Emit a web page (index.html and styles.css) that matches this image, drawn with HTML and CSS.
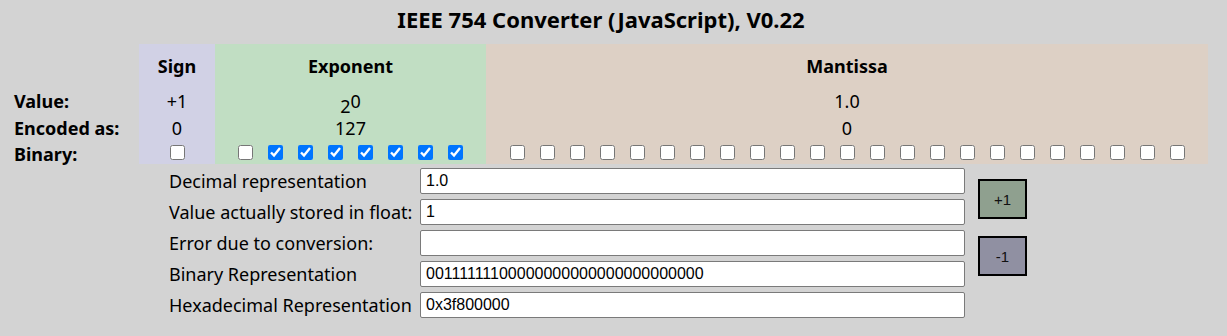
FILE: index.html
```html
<!DOCTYPE html>
<html lang="en">
<head>
<meta charset="utf-8">
<title>IEEE 754 Converter</title>
<link rel="stylesheet" href="styles.css">
</head>
<body>
<h1 class="title">IEEE 754 Converter (JavaScript), V0.22</h1>

<div class="bits">
  <div class="cell label"></div>
  <div class="cell sign head">Sign</div>
  <div class="cell expo head">Exponent</div>
  <div class="cell mant head">Mantissa</div>

  <div class="cell label">Value:</div>
  <div class="cell sign">+1</div>
  <div class="cell expo"><span class="pow-base">2</span><span class="pow-exp">0</span></div>
  <div class="cell mant">1.0</div>

  <div class="cell label">Encoded as:</div>
  <div class="cell sign">0</div>
  <div class="cell expo">127</div>
  <div class="cell mant">0</div>

  <div class="cell label lbl-bin">Binary:</div>
  <div class="cell sign boxes"><input type="checkbox"></div>
  <div class="cell expo boxes">
    <input type="checkbox"><input type="checkbox" checked><input type="checkbox" checked><input type="checkbox" checked><input type="checkbox" checked><input type="checkbox" checked><input type="checkbox" checked><input type="checkbox" checked>
  </div>
  <div class="cell mant boxes">
    <input type="checkbox"><input type="checkbox"><input type="checkbox"><input type="checkbox"><input type="checkbox"><input type="checkbox"><input type="checkbox"><input type="checkbox"><input type="checkbox"><input type="checkbox"><input type="checkbox"><input type="checkbox"><input type="checkbox"><input type="checkbox"><input type="checkbox"><input type="checkbox"><input type="checkbox"><input type="checkbox"><input type="checkbox"><input type="checkbox"><input type="checkbox"><input type="checkbox"><input type="checkbox">
  </div>
</div>

<div class="lower">
  <div class="fields">
    <label class="flabel">Decimal representation</label>
    <input class="field" type="text" value="1.0">
    <label class="flabel">Value actually stored in float:</label>
    <input class="field" type="text" value="1">
    <label class="flabel">Error due to conversion:</label>
    <input class="field" type="text" value="">
    <label class="flabel">Binary Representation</label>
    <input class="field" type="text" value="00111111100000000000000000000000">
    <label class="flabel">Hexadecimal Representation</label>
    <input class="field" type="text" value="0x3f800000">
  </div>
  <div class="buttons">
    <button class="btn plus" type="button">+1</button>
    <button class="btn minus" type="button">-1</button>
  </div>
</div>
</body>
</html>
```
FILE: styles.css
```css
html, body {
  margin: 0;
  padding: 0;
  background: #d3d3d3;
  color: #000;
  font-family: "Noto Sans", "Open Sans", sans-serif;
  font-size: 18px;
}

.title {
  margin: 4px 25px 0 0;
  font-size: 22px;
  line-height: 30px;
  font-weight: 700;
  text-align: center;
}

.bits {
  display: grid;
  grid-template-columns: 131px 76px 271px 722px;
  grid-template-rows: 44px 27px 26px 23px;
  margin: 10px 0 0 8px;
  width: max-content;
}

.cell {
  text-align: center;
  white-space: nowrap;
}
.bits .cell { line-height: 27px; }
.bits .cell:nth-child(-n+4) { line-height: 44px; }
.bits .cell:nth-child(n+9) { line-height: 26px; }
.bits .cell:nth-child(n+13) { line-height: 24px; }

.label {
  text-align: left;
  padding-left: 6px;
  font-weight: 700;
}
.head { font-weight: 700; }

.sign { background: #d1d1e5; }
.expo { background: #c1dec3; }
.mant { background: #ddd0c5; }

.pow-base { vertical-align: -4px; }
.pow-exp { vertical-align: 1px; }

.boxes {
  display: flex;
  justify-content: center;
  align-items: center;
  gap: 15px;
}
.boxes input {
  width: 15px;
  height: 15px;
  margin: 0;
}
.lbl-bin { line-height: 26px !important; }

.lower {
  display: flex;
  align-items: flex-start;
  margin: 4px 0 0 169px;
}

.fields {
  display: grid;
  grid-template-columns: 251px 545px;
  grid-auto-rows: 26px;
  row-gap: 5px;
}

.flabel {
  line-height: 26px;
  white-space: nowrap;
}

.field {
  box-sizing: border-box;
  width: 545px;
  height: 26px;
  margin: 0;
  padding: 0 5px;
  border: 1px solid #7a7a7a;
  border-radius: 2px;
  background: #fff;
  color: #000;
  font-family: "Liberation Sans", Arial, sans-serif;
  font-size: 16px;
}

.buttons {
  display: flex;
  flex-direction: column;
  gap: 17px;
  margin: 11px 0 0 13px;
}

.btn {
  box-sizing: border-box;
  width: 49px;
  height: 40px;
  margin: 0;
  padding: 0;
  border: 2px solid #000;
  border-radius: 0;
  color: #111;
  font-family: "Liberation Sans", Arial, sans-serif;
  font-size: 15px;
}
.plus { background: #8fa08f; }
.minus { background: #9090a2; }
```
